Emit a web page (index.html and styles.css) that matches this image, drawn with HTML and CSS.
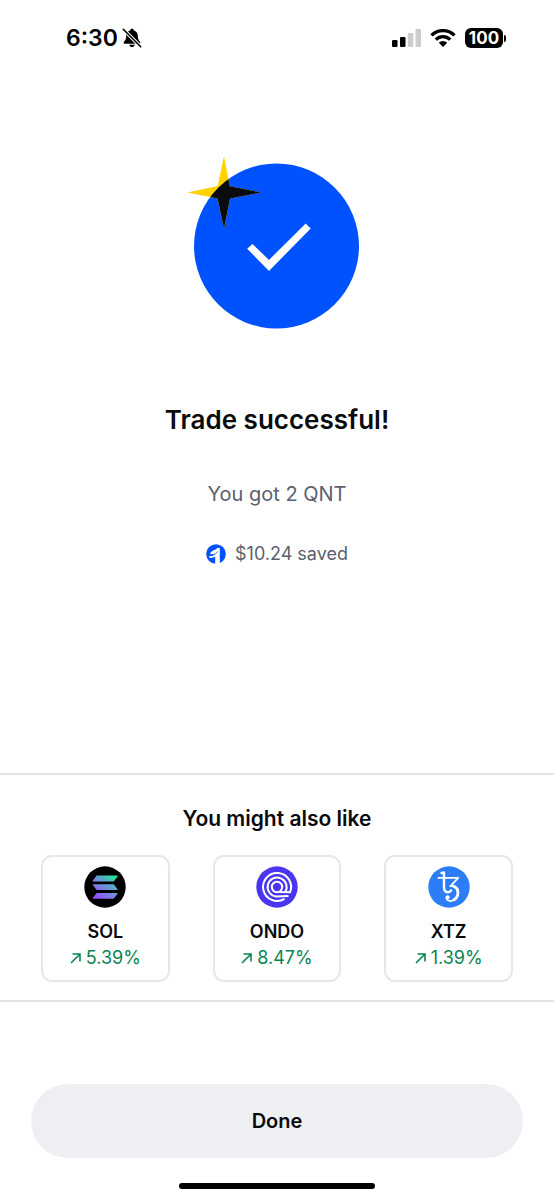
FILE: index.html
```html
<!DOCTYPE html>
<html lang="en">
<head>
<meta charset="utf-8">
<meta name="viewport" content="width=device-width, initial-scale=1">
<title>Trade successful</title>
<link rel="stylesheet" href="styles.css">
</head>
<body>
<div class="screen">
  <header class="status">
    <div class="status-left">
      <span class="clock">6:30</span>
      <svg class="bell" viewBox="0 0 20 20" width="20" height="20" aria-hidden="true">
        <path d="M10 .8c-1 0-1.800.7-1.900 1.600C5.600 3.100 4.200 5 4.200 7.600c0 3.300-.7 4.700-2.200 6.200-.8.9-.4 2 .8 2h14.400c1.200 0 1.600-1.100.8-2-1.500-1.500-2.200-2.900-2.200-6.200 0-2.600-1.400-4.500-3.900-5.200C11.800 1.500 11 .8 10 .8zM7.300 16.700c.3 1.400 1.300 2.300 2.700 2.300s2.400-.9 2.700-2.300z"/>
        <path d="M1.500 1.500l17 17" stroke="#fff" stroke-width="3.600"/>
        <path d="M1.300 1.300l17.400 17.400" stroke="#000" stroke-width="1.600" stroke-linecap="round"/>
      </svg>
    </div>
    <div class="status-right">
      <svg viewBox="0 0 29 18" width="29" height="18" aria-hidden="true">
        <rect x="0" y="11" width="5.500" height="7" rx="1.300"/>
        <rect x="8" y="8" width="5.500" height="10" rx="1.300"/>
        <rect x="15.800" y="4" width="5.500" height="14" rx="1.300" fill="#ccc"/>
        <rect x="23.500" y="0" width="5.500" height="18" rx="1.300" fill="#ccc"/>
      </svg>
      <svg viewBox="0 0 26 18" width="26" height="18" aria-hidden="true">
        <g fill="none" stroke="#000" stroke-width="3.200">
          <path d="M1.500 6.300a16.300 16.300 0 0 1 23 0"/>
          <path d="M5.800 10.700a10.200 10.200 0 0 1 14.400 0"/>
        </g>
        <path d="M13 18l-4.200-4.300a6 6 0 0 1 8.400 0z"/>
      </svg>
      <div class="battery"><span class="battery-level">100</span><span class="battery-tip"></span></div>
    </div>
  </header>

  <main class="result">
    <svg class="hero" viewBox="181 150 190 184" width="190" height="184" role="img" aria-label="Success">
      <defs>
        <clipPath id="disc"><circle cx="275.500" cy="246" r="82.500"/></clipPath>
      </defs>
      <circle cx="275.500" cy="246" r="82.500" fill="#0052ff"/>
      <path d="M223 156l5.700 30.300 31.300 6.200-31 6-6 30-6.400-30-30.400-6 30.500-6.500z" fill="#ffd200"/>
      <path d="M223 156l5.700 30.300 31.300 6.200-31 6-6 30-6.400-30-30.400-6 30.500-6.500z" fill="#0a0b0d" clip-path="url(#disc)"/>
      <path d="M246.200 248.700l5.200-4.800 16.600 16 36.700-36.300 5 4.800-41.700 42.600z" fill="#fff"/>
    </svg>
    <h1 class="title">Trade successful!</h1>
    <p class="amount">You got 2 QNT</p>
    <p class="saved">
      <svg viewBox="0 0 20 20" width="20" height="20" aria-hidden="true">
        <circle cx="10" cy="10" r="9.800" fill="#0052ff"/>
        <path d="M13.800 3.800V20H9.200v-7.200c-1.600 1-3.500 1.300-5.800 1l-.4-1.600c2.500.1 4.300-.8 5.400-2.400-1.500.6-3 .6-4.300.1C5.600 6.300 8.900 6.600 10.600 4.600c.8-.6 1.900-.8 3.200-.8z" fill="#fff"/>
        <path d="M3.200 11.600c3.800.3 6-1 8.300-4.100" fill="none" stroke="#0052ff" stroke-width=".8"/>
      </svg>
      <span>$10.24 saved</span>
    </p>
  </main>

  <section class="suggest">
    <h2 class="suggest-title">You might also like</h2>
    <div class="cards">
      <button class="card" type="button">
        <svg viewBox="0 0 42 42" width="42" height="42" aria-hidden="true">
          <defs><linearGradient id="sol" gradientUnits="userSpaceOnUse" x1="11" y1="33" x2="31" y2="8">
            <stop offset="0" stop-color="#9945ff"/><stop offset=".5" stop-color="#6f8fdc"/><stop offset="1" stop-color="#14f195"/>
          </linearGradient></defs>
          <circle cx="21" cy="21" r="20.700" fill="#000"/>
          <g fill="url(#sol)">
            <path d="M12.600 9.600H33.200a.5.500 0 0 1 .4.800l-3.900 5H9.200a.5.500 0 0 1-.4-.8z"/>
            <path d="M9.200 18.300H29.700l3.900 5a.5.500 0 0 1-.4.800H12.600l-3.800-5a.5.500 0 0 1 .4-.8z"/>
            <path d="M12.600 27H33.200a.5.500 0 0 1 .4.800l-3.900 5H9.200a.5.500 0 0 1-.4-.8z"/>
          </g>
        </svg>
        <span class="symbol">SOL</span>
        <span class="change"><svg viewBox="0 0 11 12" width="11" height="12" aria-hidden="true"><path d="M1 11L9.500 2.500M2.500 2h7.500v7.500"/></svg>5.39%</span>
      </button>
      <button class="card" type="button">
        <svg viewBox="0 0 42 42" width="42" height="42" aria-hidden="true">
          <circle cx="21" cy="21" r="20.700" fill="#4a35f0"/>
          <g fill="none" stroke="#fff" stroke-width="2">
            <path d="M28.500 32.800A14 14 0 1 1 34 26.300L23 26"/>
            <path d="M32.500 30L20.500 30.500A9.500 9.500 0 1 1 29.500 25.500"/>
            <circle cx="21" cy="21" r="5.200"/>
          </g>
        </svg>
        <span class="symbol">ONDO</span>
        <span class="change"><svg viewBox="0 0 11 12" width="11" height="12" aria-hidden="true"><path d="M1 11L9.500 2.500M2.500 2h7.500v7.500"/></svg>8.47%</span>
      </button>
      <button class="card" type="button">
        <svg viewBox="0 0 42 42" width="42" height="42" aria-hidden="true">
          <circle cx="21" cy="21" r="20.700" fill="#2c7df7"/>
          <g fill="none" stroke="#fff" stroke-width="1.800" stroke-linejoin="round" stroke-linecap="round">
            <path d="M13.500 7l2.500-.6V21c0 3.600 1.500 5.200 4 5.200 1.400 0 2.500-.7 3.100-1.800" stroke-width="2.400"/>
            <path d="M10.500 11.900H30.200L22.500 20.200"/>
            <path d="M22.500 20.200c4.500-.9 8 1.800 8 6.200 0 5-3.400 8.600-7.700 8.600-2.700 0-4.300-1.500-4.300-3.500"/>
            <path d="M25.500 20.400c2.800.8 4.300 3 4.300 6 0 3.500-1.700 6-4 7.300" stroke-width="2.600"/>
          </g>
          <circle cx="19.600" cy="31.200" r="2" fill="#fff"/>
        </svg>
        <span class="symbol">XTZ</span>
        <span class="change"><svg viewBox="0 0 11 12" width="11" height="12" aria-hidden="true"><path d="M1 11L9.500 2.500M2.500 2h7.500v7.500"/></svg>1.39%</span>
      </button>
    </div>
  </section>

  <footer class="footer">
    <button class="done" type="button">Done</button>
    <div class="home-bar"></div>
  </footer>
</div>
</body>
</html>
```
FILE: styles.css
```css
* { box-sizing: border-box; }
body {
  margin: 0;
  background: #fff;
  color: #0a0b0d;
  font-family: Inter, "Liberation Sans", sans-serif;
}
h1, h2, p { margin: 0; }
button { font: inherit; color: inherit; cursor: pointer; }
svg { display: block; flex: none; }

.screen {
  display: flex;
  flex-direction: column;
  min-height: 100vh;
}

.status {
  display: flex;
  justify-content: space-between;
  align-items: center;
  height: 76px;
  padding: 0 48px 0 66px;
  color: #000;
}
.status-left { display: flex; align-items: center; gap: 4px; }
.clock { font-size: 23px; line-height: 28px; font-weight: 600; }
.status-right { display: flex; align-items: center; gap: 9px; }
.battery { display: flex; align-items: center; gap: 1px; }
.battery-level {
  width: 38px;
  border-radius: 6px;
  background: #000;
  color: #fff;
  font-size: 17px;
  line-height: 20px;
  font-weight: 700;
  text-align: center;
}
.battery-tip {
  width: 2px;
  height: 7px;
  border-radius: 0 2px 2px 0;
  background: #000;
}

.result {
  flex: 1;
  display: flex;
  flex-direction: column;
  align-items: center;
  padding-top: 74px;
}
.title {
  margin-top: 68px;
  font-size: 26px;
  line-height: 36px;
  font-weight: 600;
}
.amount {
  margin-top: 42px;
  color: #5b616e;
  font-size: 20px;
  line-height: 28px;
}
.saved {
  display: flex;
  align-items: center;
  gap: 9px;
  margin-top: 32px;
  color: #5b616e;
  font-size: 18px;
  line-height: 28px;
}

.suggest {
  padding: 30px 41px 18px;
  border-top: 2px solid #e2e3e8;
  border-bottom: 2px solid #e2e3e8;
}
.suggest-title {
  font-size: 21px;
  line-height: 28px;
  font-weight: 600;
  text-align: center;
}
.cards {
  display: grid;
  grid-template-columns: repeat(3, 1fr);
  gap: 43px;
  margin-top: 22px;
}
.card {
  display: flex;
  flex-direction: column;
  align-items: center;
  padding: 9px 0;
  border: 2px solid #e6e7eb;
  border-radius: 11px;
  background: #fff;
  font-size: 18px;
  line-height: 26px;
}
.symbol { margin-top: 11px; font-weight: 600; }
.change {
  display: flex;
  align-items: center;
  gap: 5px;
  color: #098551;
}
.change path { fill: none; stroke: #098551; stroke-width: 1.600px; }

.footer {
  display: flex;
  flex-direction: column;
  align-items: center;
  padding: 82px 31px 11px;
}
.done {
  width: 100%;
  height: 74px;
  border: 0;
  border-radius: 37px;
  background: #eeeff3;
  font-size: 20px;
  font-weight: 600;
}
.home-bar {
  width: 40%;
  height: 6px;
  margin-top: 25px;
  border-radius: 3px;
  background: #000;
}
```
